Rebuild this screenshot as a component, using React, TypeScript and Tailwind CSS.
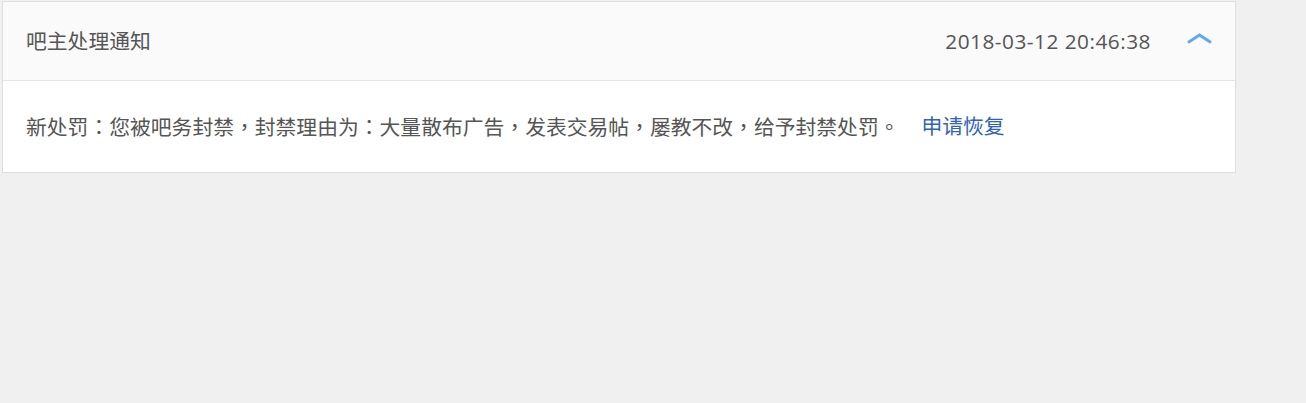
const punct = "：，。";

function Text({ children }: { children: string }) {
  // fullwidth punctuation in the reference sits centred in its cell
  return (
    <>
      {children.split("").map((ch, i) =>
        punct.includes(ch) ? (
          <span key={i} style={{ fontFamily: '"Noto Sans CJK TC", sans-serif' }}>
            {ch}
          </span>
        ) : (
          ch
        )
      )}
    </>
  );
}

export default function App() {
  const font = { fontFamily: '"Open Sans", "Noto Sans CJK SC", sans-serif' };

  return (
    <div className="min-h-[403px] w-full bg-[#f0f0f0] pt-[1px] pl-[2px]" style={font}>
      <div className="w-[1234px] border border-[#dedede] bg-white">
        {/* header */}
        <div className="flex h-[79px] items-center border-b border-[#e3e3e3] bg-[#fafafa] pl-[23px] pr-[22px]">
          <div className="flex-1 text-[20.8px] leading-none text-[#555]">吧主处理通知</div>
          <div className="text-[20.8px] leading-none tracking-[0.5px] text-[#555]">2018-03-12 20:46:38</div>
          <button className="mb-[6px] ml-[35px] flex h-[11px] w-[27px] items-center justify-center">
            <svg width="27" height="11" viewBox="0 0 27 11">
              <polyline
                points="2,9.5 13.5,2 25,9.5"
                fill="none"
                stroke="#5caaf0"
                strokeWidth="3"
              />
            </svg>
          </button>
        </div>
        {/* body */}
        <div className="flex h-[91px] items-center pl-[23px] pr-[22px] text-[20.8px] leading-none">
          <span className="text-[#555]">
            <Text>新处罚：您被吧务封禁，封禁理由为：大量散布广告，发表交易帖，屡教不改，给予封禁处罚。</Text>
          </span>
          <a className="ml-[22px] cursor-pointer text-[#2f64b6]">申请恢复</a>
        </div>
      </div>
    </div>
  );
}
